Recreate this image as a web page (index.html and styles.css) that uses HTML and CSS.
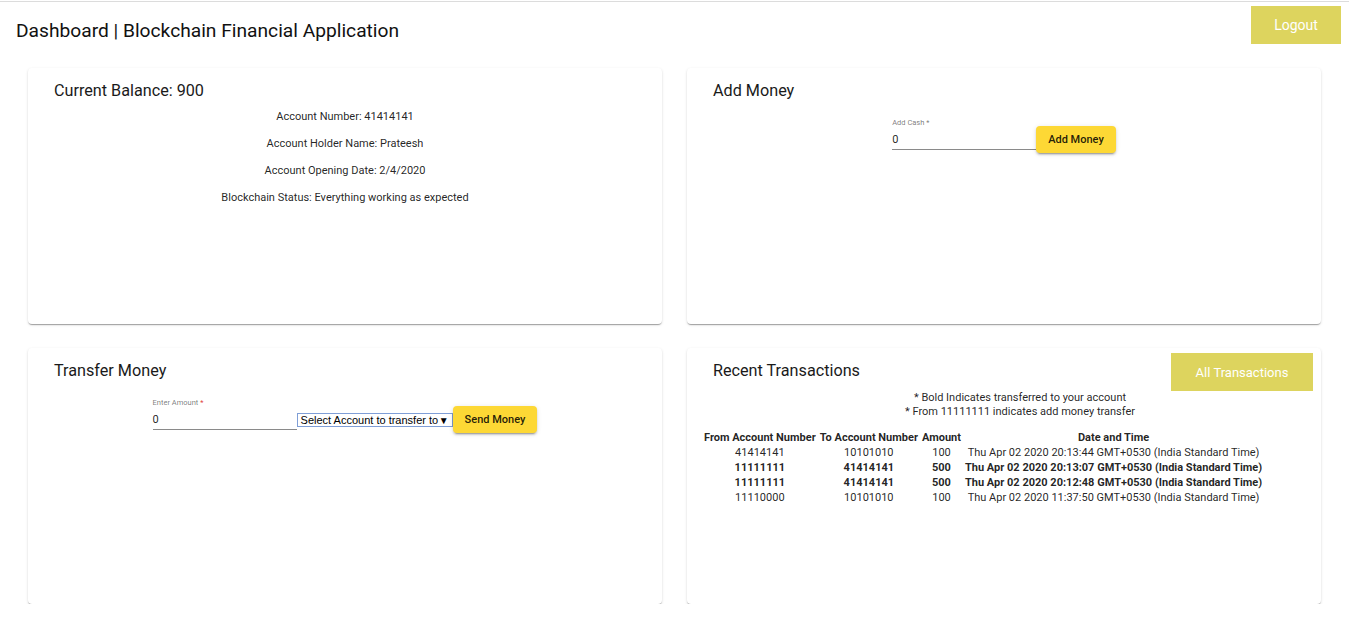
FILE: index.html
```html
<!DOCTYPE html>
<html lang="en">
<head>
<meta charset="utf-8">
<title>Dashboard | Blockchain Financial Application</title>
<link rel="stylesheet" href="styles.css">
</head>
<body>
<header class="topbar">
  <h1 class="app-title">Dashboard | Blockchain Financial Application</h1>
  <button class="btn-flat logout">Logout</button>
</header>
<main class="grid">
  <section class="card">
    <h2 class="card-title">Current Balance: 900</h2>
    <div class="info">
      <p>Account Number: 41414141</p>
      <p>Account Holder Name: Prateesh</p>
      <p>Account Opening Date: 2/4/2020</p>
      <p>Blockchain Status: Everything working as expected</p>
    </div>
  </section>
  <section class="card">
    <h2 class="card-title">Add Money</h2>
    <div class="form-row">
      <div class="field">
        <label class="field-label">Add Cash *</label>
        <div class="field-input">0</div>
      </div>
      <button class="btn-raised">Add Money</button>
    </div>
  </section>
  <section class="card">
    <h2 class="card-title">Transfer Money</h2>
    <div class="form-row">
      <div class="field">
        <label class="field-label">Enter Amount <span class="req">*</span></label>
        <div class="field-input">0</div>
      </div>
      <div class="select-box"><span>Select Account to transfer to</span><span class="arrow">▼</span></div>
      <button class="btn-raised">Send Money</button>
    </div>
  </section>
  <section class="card">
    <div class="card-head">
      <h2 class="card-title">Recent Transactions</h2>
      <button class="btn-flat all-tx">All Transactions</button>
    </div>
    <div class="notes">
      <div>* Bold Indicates transferred to your account</div>
      <div>* From 11111111 indicates add money transfer</div>
    </div>
    <table class="tx">
      <thead>
        <tr><th>From Account Number</th><th>To Account Number</th><th>Amount</th><th>Date and Time</th></tr>
      </thead>
      <tbody>
        <tr><td>41414141</td><td>10101010</td><td>100</td><td>Thu Apr 02 2020 20:13:44 GMT+0530 (India Standard Time)</td></tr>
        <tr class="in"><td>11111111</td><td>41414141</td><td>500</td><td>Thu Apr 02 2020 20:13:07 GMT+0530 (India Standard Time)</td></tr>
        <tr class="in"><td>11111111</td><td>41414141</td><td>500</td><td>Thu Apr 02 2020 20:12:48 GMT+0530 (India Standard Time)</td></tr>
        <tr><td>11110000</td><td>10101010</td><td>100</td><td>Thu Apr 02 2020 11:37:50 GMT+0530 (India Standard Time)</td></tr>
      </tbody>
    </table>
  </section>
</main>
</body>
</html>
```
FILE: styles.css
```css
* { box-sizing: border-box; }
html, body { margin: 0; padding: 0; }
body {
  background: #fff;
  font-family: Roboto, "Liberation Sans", sans-serif;
  color: rgba(0,0,0,0.87);
  padding-top: 1px;
}
.topbar {
  display: flex;
  justify-content: space-between;
  align-items: flex-start;
  border-top: 1px solid #dcdcdc;
  padding: 4px 8px 0 16px;
}
.app-title {
  margin: 13px 0 0;
  font-size: 19.2px;
  line-height: 24px;
  font-weight: 400;
  color: #111;
}
.btn-flat {
  border: none;
  background: #ddd45e;
  color: #fff;
  font-family: Roboto, "Liberation Sans", sans-serif;
  font-size: 14px;
  font-weight: 400;
  cursor: pointer;
}
.logout { width: 90px; height: 38px; }
.grid {
  display: grid;
  grid-template-columns: 634px 634px;
  grid-auto-rows: 256px;
  column-gap: 25px;
  row-gap: 24px;
  padding: 0 28px;
  margin-top: 24px;
}
.card {
  background: #fff;
  border-radius: 4px;
  box-shadow: 0 2px 1px -1px rgba(0,0,0,0.2), 0 1px 1px 0 rgba(0,0,0,0.14), 0 1px 3px 0 rgba(0,0,0,0.12);
  padding: 13px 26px 12px;
}
.card-title {
  margin: 0;
  font-size: 16.2px;
  line-height: 20px;
  font-weight: 400;
  color: #1a1a1a;
}
.info { margin-top: 2px; text-align: center; font-size: 11px; }
.info p { margin: 0; line-height: 27px; }
.form-row {
  display: flex;
  justify-content: center;
  align-items: flex-start;
  margin-top: 17px;
}
.field { width: 144px; }
.field-label {
  display: block;
  font-size: 7.5px;
  line-height: 9px;
  color: rgba(0,0,0,0.54);
}
.field-label .req { color: #e04040; }
.field-input {
  margin-top: 2px;
  height: 21px;
  line-height: 21px;
  font-size: 11px;
  border-bottom: 1px solid #8a8a8a;
}
.btn-raised {
  margin-top: 8px;
  height: 27px;
  padding: 0 12px;
  border: none;
  border-radius: 4px;
  background: #fdd835;
  color: rgba(0,0,0,0.87);
  font-family: Roboto, "Liberation Sans", sans-serif;
  font-size: 11px;
  font-weight: 500;
  box-shadow: 0 3px 1px -2px rgba(0,0,0,0.2), 0 2px 2px 0 rgba(0,0,0,0.14), 0 1px 5px 0 rgba(0,0,0,0.12);
}
.select-box {
  margin-top: 15px;
  width: 156px;
  height: 14px;
  border: 1px solid #7f9ed6;
  display: flex;
  justify-content: space-between;
  align-items: center;
  padding: 0 3px;
  font-family: "Liberation Sans", Arial, sans-serif;
  font-size: 11px;
  color: #000;
  background: #fff;
}
.select-box .arrow { font-size: 10px; }
.card-head {
  display: flex;
  justify-content: space-between;
  align-items: flex-start;
  margin-right: -18px;
}
.all-tx {
  width: 142px;
  height: 38px;
  margin-top: -8px;
  font-size: 13px;
}
.notes {
  margin-top: 0;
  padding-left: 32px;
  text-align: center;
  font-size: 11px;
  line-height: 14px;
}
.tx {
  margin: 10px 0 0 -12px;
  font-size: 11px;
  line-height: 13px;
  border-spacing: 2px;
}
.tx th { font-weight: 700; padding: 0 1px; }
.tx td { text-align: center; padding: 0 1px; }
.tx tr.in td { font-weight: 700; }
```
